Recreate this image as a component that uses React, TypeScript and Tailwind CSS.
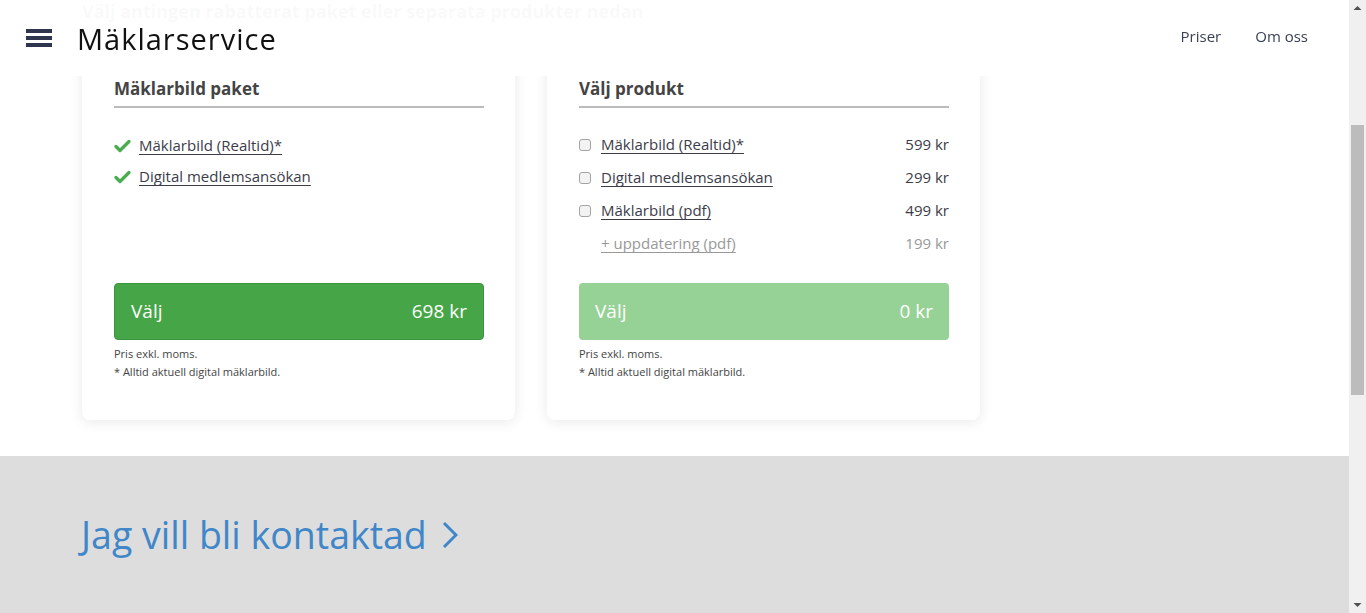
import { useEffect, useRef } from 'react';

const packageItems = ['Mäklarbild (Realtid)*', 'Digital medlemsansökan'];

const products = [
  { name: 'Mäklarbild (Realtid)*', price: '599 kr', box: true },
  { name: 'Digital medlemsansökan', price: '299 kr', box: true },
  { name: 'Mäklarbild (pdf)', price: '499 kr', box: true },
  { name: '+ uppdatering (pdf)', price: '199 kr', box: false },
];

function Check() {
  return (
    <svg width="17" height="14" viewBox="0 0 17 14" className="shrink-0">
      <path d="M2 7.5 L6 11.5 L15 2.5" fill="none" stroke="#48ad4e" strokeWidth="3.2" strokeLinecap="round" strokeLinejoin="round" />
    </svg>
  );
}

function Notes() {
  return (
    <div className="mt-[5px] text-[11px] leading-[18px] text-[#444]">
      <p>Pris exkl. moms.</p>
      <p>* Alltid aktuell digital mäklarbild.</p>
    </div>
  );
}

function Card({ title, children }: { title: string; children: React.ReactNode }) {
  return (
    <div className="w-[433px] rounded-lg bg-white pl-8 pr-[31px] pt-[33px] pb-[39px] shadow-[0_2px_14px_rgba(0,0,0,0.09)]">
      <h2 className="border-b-2 border-[#bbbbbb] pb-[5px] text-[17px] font-bold leading-6 text-[#444]">{title}</h2>
      {children}
    </div>
  );
}

// window scrollbar as it appears in the screenshot
function ScrollBar() {
  return (
    <div className="flex w-[17px] shrink-0 flex-col items-center bg-[#f0f0f0]">
      <svg width="9" height="17" viewBox="0 0 9 17" className="shrink-0">
        <path d="M0.5 10 L4.5 6 L8.5 10 Z" fill="#505050" />
      </svg>
      <div className="mt-[108px] h-[270px] w-[13px] bg-[#bcbcbc]" />
      <svg width="9" height="17" viewBox="0 0 9 17" className="mt-auto shrink-0">
        <path d="M0.5 7 L4.5 11 L8.5 7 Z" fill="#505050" />
      </svg>
    </div>
  );
}

export default function App() {
  const scroller = useRef<HTMLDivElement>(null);

  useEffect(() => {
    if (scroller.current) scroller.current.scrollTop = 245;
  }, []);

  return (
    <div className="flex h-screen font-['Open_Sans','Lato',sans-serif] text-[#3c3c4a]">
      <div ref={scroller} className="flex-1 overflow-y-auto bg-white [scrollbar-width:none]">
        <header className="fixed left-0 right-[17px] top-0 z-10 flex h-[76px] items-center bg-white/[0.97] pl-[26px] pr-[41px]">
          <button className="flex w-[26px] flex-col gap-[3.5px]" aria-label="Meny">
            <span className="h-[3.5px] bg-[#30354f]" />
            <span className="h-[3.5px] bg-[#30354f]" />
            <span className="h-[3.5px] bg-[#30354f]" />
          </button>
          <span className="ml-[25px] text-[29px] leading-none tracking-[1px] text-[#111]">Mäklarservice</span>
          <nav className="mb-[4px] ml-auto flex gap-[34px] text-[15px] text-[#3a3f55]">
            <a>Priser</a>
            <a>Om oss</a>
          </nav>
        </header>

        <main className="px-[82px] pt-[151px]">
          <h1 className="mb-[45px] text-[40px] font-bold leading-[48px] text-[#333]">Priser</h1>
          <p className="text-[18px] font-bold leading-6 text-[#555]">Välj antingen rabatterat paket eller separata produkter nedan</p>

          <div className="mt-[21px] flex gap-8">
            <Card title="Mäklarbild paket">
              <ul className="h-[175px] pt-[22px]">
                {packageItems.map((item) => (
                  <li key={item} className="flex h-[31px] items-center gap-[8px]">
                    <Check />
                    <a className="text-[15px] underline underline-offset-[3px]">{item}</a>
                  </li>
                ))}
              </ul>
              <button className="flex h-[57px] w-full items-center justify-between rounded border border-[#3b9440] bg-[#46a546] px-4 text-[19px] text-white">
                <span>Välj</span>
                <span>698 kr</span>
              </button>
              <Notes />
            </Card>

            <Card title="Välj produkt">
              <ul className="h-[175px] pt-[20px]">
                {products.map((p) => (
                  <li key={p.name} className={`flex h-[33px] items-center ${p.box ? 'text-[#3c3c4a]' : 'text-[#999]'}`}>
                    {p.box ? (
                      <input
                        type="checkbox"
                        className="m-0 h-[12px] w-[12px] shrink-0 appearance-none rounded-[3px] border border-[#a3a3a3] bg-[#f3f3f3]"
                      />
                    ) : (
                      <span className="w-[12px] shrink-0" />
                    )}
                    <a className="ml-[10px] text-[15px] underline underline-offset-[3px]">{p.name}</a>
                    <span className="ml-auto text-[15px]">{p.price}</span>
                  </li>
                ))}
              </ul>
              <button className="flex h-[57px] w-full items-center justify-between rounded bg-[#96d195] px-4 text-[19px] text-white">
                <span>Välj</span>
                <span>0 kr</span>
              </button>
              <Notes />
            </Card>
          </div>
        </main>

        <section className="mt-9 h-[614px] bg-[#dddddd] px-[81px] pt-[51px]">
          <a className="flex items-center gap-[15px] text-[37.5px] text-[#3f87c9]">
            <span>Jag vill bli kontaktad</span>
            <svg width="16" height="28" viewBox="0 0 16 28">
              <path d="M2 2 L14 14 L2 26" fill="none" stroke="#3f87c9" strokeWidth="3" />
            </svg>
          </a>
        </section>
      </div>
      <ScrollBar />
    </div>
  );
}
